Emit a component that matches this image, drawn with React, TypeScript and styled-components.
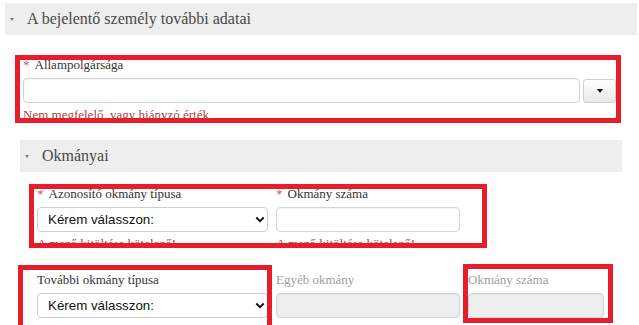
import React from "react";
import styled, { createGlobalStyle } from "styled-components";

const GlobalStyle = createGlobalStyle`
  html, body { margin: 0; padding: 0; background: #fff; }
  * { box-sizing: border-box; }
`;

const Page = styled.div`
  position: relative;
  width: 639px;
  height: 325px;
  overflow: hidden;
  background: #fff;
  padding-top: 3px;
  font-family: "Liberation Serif", "Times New Roman", serif;
  color: #333;
`;

const SectionHeader = styled.div<{ $left: number; $right: number; $top?: number }>`
  display: flex;
  align-items: center;
  gap: 9px;
  height: 32px;
  margin: ${(p) => p.$top ?? 0}px ${(p) => p.$right}px 0 ${(p) => p.$left}px;
  padding-left: 5px;
  background: #eeeeee;
  font-size: 16px;
  color: #484848;
`;

const Caret = styled.span`
  width: 0;
  height: 0;
  border-left: 2.5px solid transparent;
  border-right: 2.5px solid transparent;
  border-top: 3px solid #777;
  margin-right: 4px;
`;

const Section = styled.div<{ $left: number; $right: number; $top: number }>`
  padding: 0 ${(p) => p.$right}px 0 ${(p) => p.$left}px;
  margin-top: ${(p) => p.$top}px;
`;

const Label = styled.div<{ $disabled?: boolean }>`
  font-size: 13px;
  line-height: 14px;
  height: 14px;
  white-space: nowrap;
  color: ${(p) => (p.$disabled ? "#a0a0a0" : "#333")};
  margin-bottom: 6px;
`;

const Req = styled.span`
  color: #d4526a;
  margin-right: 5px;
`;

const ErrorText = styled.div`
  font-size: 13px;
  line-height: 14px;
  height: 14px;
  margin-top: 5px;
  white-space: nowrap;
  color: #a94442;
`;

const InputRow = styled.div`
  display: flex;
  gap: 3px;
`;

const TextInput = styled.div<{ $disabled?: boolean }>`
  flex: 1;
  height: 25px;
  border: 1px solid #d4d4d4;
  border-radius: 4px;
  background: ${(p) => (p.$disabled ? "#eeeeee" : "#fff")};
  box-shadow: inset 0 1px 1px rgba(0, 0, 0, 0.04);
`;

const DropButton = styled.div`
  width: 33px;
  height: 24px;
  margin-top: 1px;
  border: 1px solid #d0d0d0;
  border-radius: 3px;
  background: linear-gradient(#ffffff, #e8e8e8);
  display: flex;
  align-items: center;
  justify-content: center;
`;

const SmallCaret = styled.span`
  width: 0;
  height: 0;
  border-left: 3.5px solid transparent;
  border-right: 3.5px solid transparent;
  border-top: 4px solid #111;
`;

const Grid = styled.div<{ $cols: string }>`
  display: grid;
  grid-template-columns: ${(p) => p.$cols};
  column-gap: 8px;
`;

const Field = styled.div``;

const SelectBox = styled.div`
  height: 25px;
  border: 1px solid #cfcfcf;
  border-radius: 4px;
  background: #fff;
  display: flex;
  align-items: center;
  justify-content: space-between;
  padding: 0 2px 0 10px;
  font-family: "Liberation Sans", Arial, sans-serif;
  font-size: 13.333px;
  color: #111;
`;

const Row3 = styled.div`
  margin-top: 22px;
`;

const Highlight = styled.div<{ $x: number; $y: number; $w: number; $h: number }>`
  position: absolute;
  left: ${(p) => p.$x}px;
  top: ${(p) => p.$y}px;
  width: ${(p) => p.$w}px;
  height: ${(p) => p.$h}px;
  border: 5px solid #e61e2b;
  pointer-events: none;
`;

const Chevron = () => (
  <svg width="10" height="7" viewBox="0 0 10 7">
    <path d="M1.3 1.5 L5 5.2 L8.7 1.5" fill="none" stroke="#111" strokeWidth="1.9" />
  </svg>
);

const Select = () => (
  <SelectBox>
    <span>Kérem válasszon:</span>
    <Chevron />
  </SelectBox>
);

export default function App() {
  return (
    <>
      <GlobalStyle />
      <Page>
        <SectionHeader $left={5} $right={2}>
          <Caret />
          A bejelentő személy további adatai
        </SectionHeader>

        <Section $left={23} $right={23} $top={23}>
          <Label>
            <Req>*</Req>Állampolgársága
          </Label>
          <InputRow>
            <TextInput />
            <DropButton>
              <SmallCaret />
            </DropButton>
          </InputRow>
          <ErrorText>Nem megfelelő, vagy hiányzó érték</ErrorText>
        </Section>

        <SectionHeader $left={20} $right={17} $top={18}>
          <Caret />
          Okmányai
        </SectionHeader>

        <Section $left={37} $right={35} $top={15}>
          <Grid $cols="231px 184px 136px">
            <Field>
              <Label>
                <Req>*</Req>Azonosító okmány típusa
              </Label>
              <Select />
              <ErrorText>A mező kitöltése kötelező!</ErrorText>
            </Field>
            <Field>
              <Label>
                <Req>*</Req>Okmány száma
              </Label>
              <TextInput />
              <ErrorText>A mező kitöltése kötelező!</ErrorText>
            </Field>
          </Grid>
          <Row3>
            <Grid $cols="231px 184px 136px">
              <Field>
                <Label>További okmány típusa</Label>
                <Select />
              </Field>
              <Field>
                <Label $disabled>Egyéb okmány</Label>
                <TextInput $disabled />
              </Field>
              <Field>
                <Label $disabled>Okmány száma</Label>
                <TextInput $disabled />
              </Field>
            </Grid>
          </Row3>
        </Section>

        <Highlight $x={15} $y={55} $w={606} $h={68} />
        <Highlight $x={29} $y={184} $w={458} $h={64} />
        <Highlight $x={18} $y={265} $w={254} $h={70} />
        <Highlight $x={463} $y={264} $w={150} $h={59} />
      </Page>
    </>
  );
}
